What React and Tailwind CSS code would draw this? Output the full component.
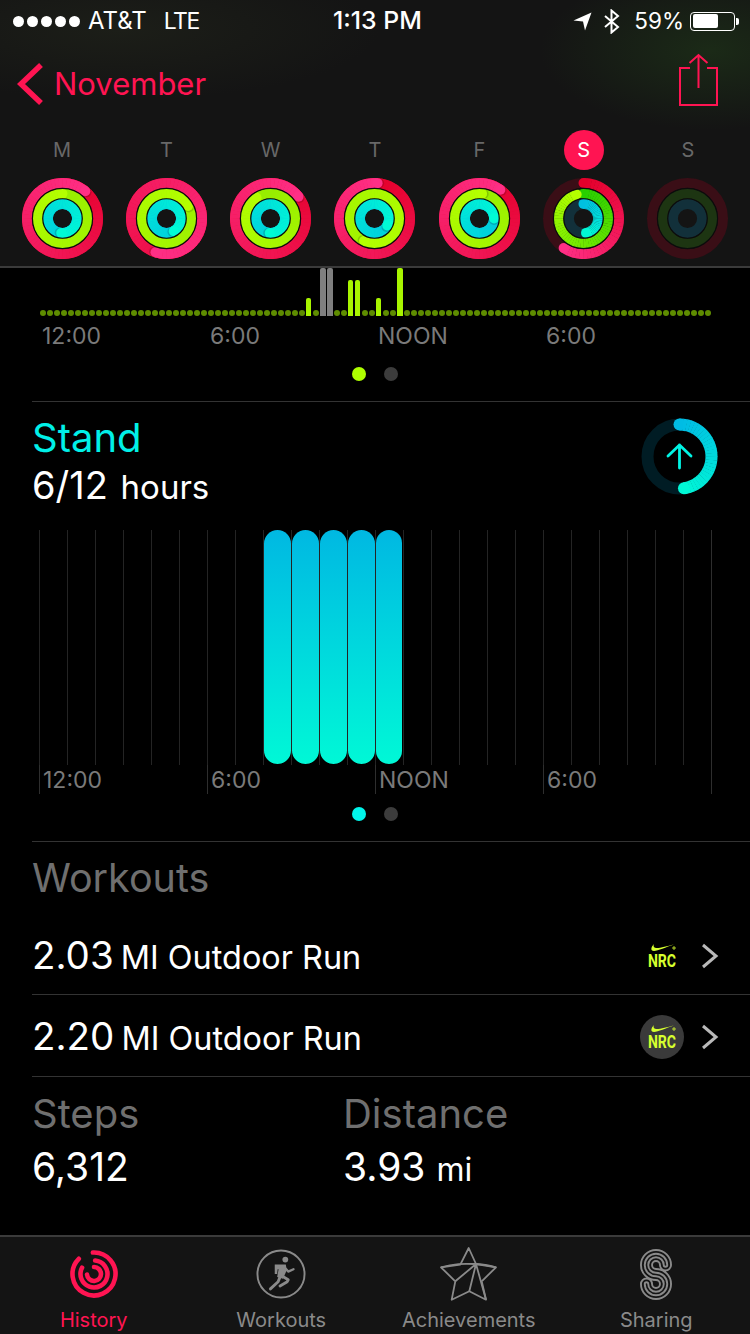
import React from "react";

const FONT = "font-['Inter','Noto_Sans',sans-serif]";

function hex2(c) { return [1, 3, 5].map((i) => parseInt(c.slice(i, i + 2), 16)); }
function mix(a, b, t) {
  const x = hex2(a), y = hex2(b);
  return `rgb(${x.map((v, i) => Math.round(v + (y[i] - v) * t)).join(",")})`;
}
function pt(r, deg, c = 40.5) {
  const a = ((deg - 90) * Math.PI) / 180;
  return [c + r * Math.cos(a), c + r * Math.sin(a)];
}
function Arc({ r, sweep, from, to, base, w = 10, shadow }) {
  const step = 6;
  const segs = [];
  for (let s = 0; s < sweep; s += step) {
    const e = Math.min(s + step + 0.6, sweep);
    const [x1, y1] = pt(r, s);
    const [x2, y2] = pt(r, e);
    segs.push(
      <path key={s} d={`M${x1} ${y1}A${r} ${r} 0 0 1 ${x2} ${y2}`} fill="none" stroke={mix(from, to, s / sweep)} strokeWidth={w} />
    );
  }
  const [sx, sy] = pt(r, 0);
  const [ex, ey] = pt(r, sweep);
  const [hx, hy] = pt(r, sweep + 90 / r);
  return (
    <g>
      <circle cx="40.5" cy="40.5" r={r} fill="none" stroke={base} strokeWidth={w} />
      {sweep > 0 && sweep <= 360 && <circle cx={sx} cy={sy} r={w / 2} fill={from} />}
      {segs}
      {shadow && sweep > 360 && <circle cx={hx} cy={hy} r={w / 2} fill="#000" fillOpacity="0.16" />}
      {sweep > 0 && <circle cx={ex} cy={ey} r={w / 2} fill={to} />}
    </g>
  );
}
const RED = ["#e4002b", "#ff2f86"];
const GREEN = ["#98ee00", "#b4ff00"];
const CYAN = ["#00c0e0", "#00fbd6"];
function Rings({ a, b, c, dim }) {
  return (
    <svg width="81" height="81" viewBox="0 0 81 81">
      <Arc shadow r={35.5} sweep={a} from={RED[0]} to={RED[1]} base={dim ? "#3a0e16" : "#e4002b"} />
      <Arc shadow r={24.9} sweep={b} from={dim && b ? "#28cf00" : GREEN[0]} to={GREEN[1]} base={dim ? "#1d3512" : "#98ee00"} />
      <Arc shadow r={14.6} sweep={c} from={CYAN[0]} to={CYAN[1]} base={dim ? "#12303a" : "#00c0e0"} />
      <circle cx="40.5" cy="40.5" r="30.1" fill="none" stroke="#0c0c0c" strokeWidth="1.2" />
      <circle cx="40.5" cy="40.5" r="19.75" fill="none" stroke="#0c0c0c" strokeWidth="1.2" />
    </svg>
  );
}
const days = [
  { l: "M", a: 400, b: 360, c: 545 },
  { l: "T", a: 558, b: 420, c: 510 },
  { l: "W", a: 412, b: 326, c: 543 },
  { l: "T", a: 365, b: 565, c: 479 },
  { l: "F", a: 396, b: 366, c: 450 },
  { l: "S", a: 214, b: 344, c: 170, dim: true, on: true },
  { l: "S", a: 0, b: 0, c: 0, dim: true },
];

function Signal() {
  return (
    <div className="flex gap-[3px]">
      {[0, 1, 2, 3, 4].map((i) => <span key={i} className="w-[11px] h-[11px] rounded-full bg-white" />)}
    </div>
  );
}
function StatusBar() {
  return (
    <div className="h-[42px] relative flex items-center justify-between pl-[13px] pr-[11px] text-white text-[24px]">
      <div className="flex items-center">
        <Signal />
        <span className="ml-[8px]">AT&amp;T</span>
        <span className="ml-[17px] text-[23px] tracking-[-1.500px]">LTE</span>
      </div>
      <span className="absolute left-[333px] font-medium text-[24.800px]">1:13 PM</span>
      <div className="flex items-center">
        <svg width="19" height="19" viewBox="0 0 19 19"><path d="M0.5 8.5L18.5 0.5L12 18.5L10 9.5Z" fill="#fff" /></svg>
        <svg className="ml-[11px]" width="17" height="25" viewBox="0 0 17 25"><path d="M2 7L15 18L8.5 23.500V1.500L15 7L2 18" fill="none" stroke="#fff" strokeWidth="2" /></svg>
        <span className="ml-[14px] text-[22.500px]">59%</span>
        <div className="ml-[6px] w-[45px] h-[19px] border border-white rounded-[4px] p-[1.500px]">
          <div className="w-[25px] h-full bg-white rounded-[2px]" />
        </div>
        <span className="w-[3px] h-[7px] bg-white rounded-r-[2px] ml-[1px]" />
      </div>
    </div>
  );
}
function Header() {
  return (
    <header className="h-[268px] shrink-0 border-b-2 border-[#3b3b3b] flex flex-col bg-[#141414] bg-[radial-gradient(ellipse_170px_80px_at_710px_50px,#1b2a17,transparent),radial-gradient(ellipse_260px_70px_at_120px_30px,#1c1e18,transparent)]">
      <StatusBar />
      <div className="h-[88px] flex items-center justify-between pl-[17px] pr-[31px]">
        <div className="flex items-center">
          <svg className="mt-[-4px]" width="27" height="44" viewBox="0 0 27 44"><path d="M24 3L4 22L24 41" fill="none" stroke="#ff1452" strokeWidth="5.500" /></svg>
          <span className="ml-[10px] text-[#ff1452] text-[31px] mt-[-3px]">November</span>
        </div>
        <svg className="mt-[-12px]" width="40" height="54" viewBox="0 0 40 54">
          <path d="M11 15H1V52H38V15H28M19.500 35V2M10.500 10L19.500 2L28.500 10" fill="none" stroke="#ff1452" strokeWidth="2" />
        </svg>
      </div>
      <div className="grid grid-cols-7 px-[10px]">
        {days.map((d, i) => (
          <div key={i} className="flex flex-col items-center">
            <div className={`w-[40px] h-[40px] rounded-full flex items-center justify-center text-[20px] ${d.on ? "bg-[#ff1452] text-white" : "text-[#686868]"}`}>{d.l}</div>
            <div className="mt-[8px]"><Rings {...d} /></div>
          </div>
        ))}
      </div>
    </header>
  );
}

const moveBars = {
  38: ["h-[18px]", "bg-[#a8f500]", "w-[5px]"],
  40: ["h-[48px]", "bg-[#7f7f7f]", "w-[6px]"],
  41: ["h-[48px]", "bg-[#7f7f7f]", "w-[6px]"],
  44: ["h-[36px]", "bg-[#a8f500]", "w-[5px]"],
  45: ["h-[36px]", "bg-[#a8f500]", "w-[5px]"],
  48: ["h-[18px]", "bg-[#a8f500]", "w-[5px]"],
  51: ["h-[48px]", "bg-[#a8f500]", "w-[6px]"],
};
function Labels({ ticks }) {
  return (
    <div className={`grid grid-cols-[repeat(4,168px)] ml-[39px] w-[673px] ${ticks ? "border-r border-[#2e2e2e]" : ""}`}>
      {["12:00", "6:00", "NOON", "6:00"].map((t, i) => (
        <div key={i} className={`h-[29px] flex items-center pl-[3px] text-[#7a7a7a] text-[23px] ${ticks ? "border-l border-[#2e2e2e] pt-[1px]" : ""}`}>{t}</div>
      ))}
    </div>
  );
}
function Pager({ color }) {
  return (
    <div className="flex justify-center gap-[18px] w-[750px]">
      <span className={`w-[14px] h-[14px] rounded-full ${color}`} />
      <span className="w-[14px] h-[14px] rounded-full bg-[#3c3c3c]" />
    </div>
  );
}
function MoveChart() {
  return (
    <section className="h-[134px] shrink-0 border-b border-[#333] ml-[32px] flex flex-col">
      <div className="-ml-[32px]">
        <div className="h-[48px] pl-[39px] flex items-end">
          {Array.from({ length: 96 }).map((_, i) => {
            const b = moveBars[i];
            return (
              <div key={i} className="w-[7px] flex justify-center items-end h-full">
                {b ? <span className={`${b.join(" ")} rounded-t-[2px]`} /> : <span className="w-[6px] h-[6px] rounded-full bg-[#5e8c00]" />}
              </div>
            );
          })}
        </div>
        <div className="mt-[6px]"><Labels /></div>
        <div className="mt-[16px]"><Pager color="bg-[#aeff00]" /></div>
      </div>
    </section>
  );
}
function StandRing() {
  return (
    <svg width="81" height="81" viewBox="0 0 81 81" className="mt-[14px]">
      <Arc r={32} sweep={172} from="#00bce4" to="#00f8d6" base="#001c24" w={12} />
      <path d="M40.500 29V52M29 40L40.500 29L52 40" fill="none" stroke="#00f4e4" strokeWidth="2.800" strokeLinecap="round" strokeLinejoin="round" />
    </svg>
  );
}
function StandChart() {
  return (
    <section className="h-[439px] shrink-0 flex flex-col">
      <div className="h-[128px] flex justify-between pl-[32px] pr-[30px]">
        <div>
          <div className="text-[#00f0e8] text-[40px] leading-[46px] mt-[13px]">Stand</div>
          <div className="text-white text-[38px] leading-[46px] mt-[1px]">6/12 <span className="text-[33px] ml-[2px]">hours</span></div>
        </div>
        <StandRing />
      </div>
      <div className="ml-[39px] w-[673px] grid grid-cols-[repeat(24,28px)] h-[235px] border-r border-[#2e2e2e]">
        {Array.from({ length: 24 }).map((_, i) => (
          <div key={i} className="border-l border-[#242424]">
            {i >= 8 && i <= 12 && (
              <div className={`ml-[-1px] ${i === 12 ? "w-[27px]" : "w-[28px]"} pl-[1px]`}>
                <div className="h-[234px] rounded-[14px] bg-gradient-to-b from-[#00b8e2] to-[#00f8d6]" />
              </div>
            )}
          </div>
        ))}
      </div>
      <Labels ticks />
      <div className="mt-[13px]"><Pager color="bg-[#00f4ea]" /></div>
    </section>
  );
}
function Nrc({ disc }) {
  return (
    <div className={`flex flex-col items-center justify-center ${disc ? "w-[44px] h-[44px] rounded-full bg-[#3a3a3a]" : "w-[44px]"}`}>
      <svg width="26" height="9" viewBox="0 0 26 9" className="ml-[1px]">
        <path d="M4 1C1 4 0 8 4 8C8 8 16 4 24 1.500C17 3 9 5.500 6 5C3.500 4.500 3 3 4 1Z" fill="#d6ff2e" />
        <path d="M24 3V7M22 5H26" stroke="#d6ff2e" strokeWidth="0.800" />
      </svg>
      <span className="text-[#d6ff2e] text-[18px] leading-[18px] font-bold scale-x-[0.78] font-['Roboto',sans-serif]">NRC</span>
    </div>
  );
}
function Row({ v, disc, border, first }) {
  return (
    <div className={`flex items-center ml-[32px] ${first ? "h-[83px] pt-[6px] border-b border-[#333]" : "h-[81px] pt-[3px]"}`}>
      <div className="flex-1 text-white text-[32.400px]">
        <span className="text-[38.500px] mr-[-2px]">{v}</span> MI Outdoor Run
      </div>
      <Nrc disc={disc} />
      <svg className="ml-[17px] mr-[31px]" width="18" height="26" viewBox="0 0 18 26"><path d="M2 2L15 13L2 24" fill="none" stroke="#b9b9b9" strokeWidth="3" /></svg>
    </div>
  );
}
function Workouts() {
  return (
    <section className="flex-1 border-t border-[#333] ml-[32px] flex flex-col">
      <div className="-ml-[32px]">
        <div className="h-[70px] pl-[32px] pt-[4px] flex items-center text-[#6f6f6f] text-[39.500px]">Workouts</div>
        <Row v="2.03" border first />
        <Row v="2.20" disc />
      </div>
      <div className="border-t border-[#333] grid grid-cols-[311px_1fr] pt-[14px]">
        <div>
          <div className="text-[#6f6f6f] text-[40px] leading-[46px]">Steps</div>
          <div className="text-white text-[39px] leading-[46px] mt-[7px]">6,312</div>
        </div>
        <div>
          <div className="text-[#6f6f6f] text-[40px] leading-[46px]">Distance</div>
          <div className="text-white text-[39px] leading-[46px] mt-[7px]">3.93 <span className="text-[32px]">mi</span></div>
        </div>
      </div>
    </section>
  );
}
function HistoryIcon() {
  const arc = (r, s, e) => {
    const [x1, y1] = pt(r, s, 25);
    const [x2, y2] = pt(r, e, 25);
    return `M${x1} ${y1}A${r} ${r} 0 ${e - s > 180 ? 1 : 0} 1 ${x2} ${y2}`;
  };
  return (
    <svg width="50" height="50" viewBox="0 0 50 50" fill="none" stroke="#ff1452" strokeWidth="4.600" strokeLinecap="round">
      <path d={arc(21.5, -3, 315)} />
      <path d={arc(13.5, 5, 298)} />
      <path d={arc(7, 0, 265)} />
    </svg>
  );
}
function RunIcon() {
  return (
    <svg width="50" height="50" viewBox="0 0 52 52" fill="none">
      <circle cx="26" cy="26" r="24.500" stroke="#8a8a8a" strokeWidth="2" />
      <circle cx="30.500" cy="11" r="3" fill="#8a8a8a" />
      <path d="M19.500 16H31L32 22L28 31L22 29L23.500 21H22.500L22 26H19.500Z" fill="#8a8a8a" />
      <path d="M31 20.500L33.500 23.500L39 21" stroke="#8a8a8a" strokeWidth="2.400" strokeLinecap="round" strokeLinejoin="round" />
      <path d="M25 29L23 34L15 41.500" stroke="#8a8a8a" strokeWidth="3" strokeLinecap="round" strokeLinejoin="round" />
      <path d="M27 28L33.500 32L32.500 34L25 38.500" stroke="#8a8a8a" strokeWidth="3" strokeLinecap="round" strokeLinejoin="round" />
    </svg>
  );
}
function StarIcon() {
  return (
    <svg width="58" height="54" viewBox="0 0 58 54" fill="none" stroke="#8a8a8a" strokeWidth="1.800" strokeLinejoin="round">
      <path d="M28.700 1L36 17L56 20.300L41.700 34.300L46 52.700L29.300 44.300L11.700 52.700L15.300 34.300L1 20.300L20.300 17.700Z" />
      <path d="M1 20.300C14 16.500 23 16.500 36 17C43 17.500 50 18.500 56 20.300M36 17L15.300 34.300M36 17L29.300 44.300M36 17L46 52.700" />
    </svg>
  );
}
function ShareIcon() {
  const p = "M25.500 16A9.500 9.500 0 1 0 16 25.500A9.500 9.500 0 1 1 6.500 35";
  return (
    <svg width="32" height="51" viewBox="0 0 32 51" fill="none" strokeLinecap="round">
      <path d={p} stroke="#8a8a8a" strokeWidth="13" />
      <path d={p} stroke="#141414" strokeWidth="9.200" />
      <path d={p} stroke="#8a8a8a" strokeWidth="5.400" />
      <path d={p} stroke="#141414" strokeWidth="1.600" />
    </svg>
  );
}
function TabBar() {
  const tabs = [
    ["History", <HistoryIcon />, "text-[#ff1452]"],
    ["Workouts", <RunIcon />, "text-[#8a8a8a]"],
    ["Achievements", <StarIcon />, "text-[#8a8a8a]"],
    ["Sharing", <ShareIcon />, "text-[#8a8a8a]"],
  ];
  return (
    <nav className="h-[99px] shrink-0 bg-[#141414] border-t-2 border-[#3b3b3b] grid grid-cols-4">
      {tabs.map(([l, ic, c]) => (
        <div key={l} className={`flex flex-col items-center ${c}`}>
          <div className="h-[70px] mt-[2px] flex items-center justify-center">{ic}</div>
          <span className="text-[20px] leading-[22px]">{l}</span>
        </div>
      ))}
    </nav>
  );
}
export default function App() {
  return (
    <div className={`w-[750px] h-[1334px] bg-black flex flex-col overflow-hidden ${FONT}`}>
      <Header />
      <MoveChart />
      <StandChart />
      <Workouts />
      <TabBar />
    </div>
  );
}
